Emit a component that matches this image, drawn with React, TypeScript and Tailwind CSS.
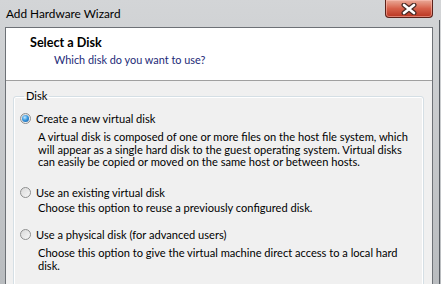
import { FunctionComponent } from "react";

const font = { fontFamily: 'Lato, "Noto Sans", sans-serif' };

const Radio: FunctionComponent<{ checked?: boolean }> = ({ checked }) => (
  <span className="relative w-[11px] h-[11px] shrink-0 rounded-full border border-[#8e8f8f] bg-gradient-to-br from-[#d9d9d9] to-[#f7f7f7] flex items-center justify-center">
    {checked && (
      <span className="w-[7px] h-[7px] rounded-full bg-[radial-gradient(circle_at_40%_35%,#c4e8ff_0%,#3a9ae0_45%,#0d4f9a_100%)]" />
    )}
  </span>
);

const Option: FunctionComponent<{
  label: string;
  desc: string;
  checked?: boolean;
  className?: string;
  descClass?: string;
}> = ({ label, desc, checked, className, descClass }) => (
  <div className={className}>
    <div className="flex items-center gap-[5px] h-[13px] leading-[13px]">
      <Radio checked={checked} />
      <span>{label}</span>
    </div>
    <p className={"pl-[18px] leading-[12.6px] " + (descClass ?? "")}>{desc}</p>
  </div>
);

const App: FunctionComponent = () => {
  return (
    <div
      className="w-[441px] h-[284px] overflow-hidden relative bg-gradient-to-b from-[#d3d5d7] to-[#b9bcbf] text-black text-[11.1px]"
      style={font}
    >
      {/* title bar */}
      <div className="h-[27px] flex items-center pl-[6px] text-[11.8px] text-black">
        Add Hardware Wizard
      </div>
      <div className="absolute top-0 left-[385px] w-[48px] h-[18px] rounded-b-[4px] border border-t-0 border-[#5b2119] bg-gradient-to-b from-[#e9a998] via-[#d6604a] to-[#b83420] flex items-center justify-center shadow-[inset_0_0_0_1px_rgba(255,200,190,0.5)]">
        <svg width="18" height="12" viewBox="0 0 18 12">
          <path d="M4 2 L14 10 M14 2 L4 10" stroke="#4a2a25" strokeWidth="5" strokeLinecap="round" />
          <path d="M4 2 L14 10 M14 2 L4 10" stroke="#ffffff" strokeWidth="2.6" strokeLinecap="round" />
        </svg>
      </div>

      {/* client area */}
      <div className="ml-[5px] w-[428px] h-[257px] border-l border-r border-t border-[#6d7176] flex flex-col">
        <div className="h-[53px] shrink-0 bg-white border-b border-[#a0a0a0] pt-[8px]">
          <div className="pl-[24px] font-bold text-[12.6px] leading-[14px]">Select a Disk</div>
          <div className="pl-[48px] mt-[3px] text-[10.9px] leading-[14px] text-[#1c2a78]">
            Which disk do you want to use?
          </div>
        </div>
        <div className="flex-1 bg-[#f0f0f0] pl-[7px] pt-[8px]">
          <fieldset className="w-[411px] h-[200px] border border-[#d5dfe5] rounded-[3px] shadow-[inset_0_0_0_1px_#ffffff] pl-[6px] pr-[4px]">
            <legend className="px-[2px] ml-[4px] leading-[14px]">Disk</legend>
            <Option
              className="mt-[9px]"
              checked
              label="Create a new virtual disk"
              desc="A virtual disk is composed of one or more files on the host file system, which will appear as a single hard disk to the guest operating system. Virtual disks can easily be copied or moved on the same host or between hosts."
              descClass="mt-[6px]"
            />
            <Option
              className="mt-[17px]"
              label="Use an existing virtual disk"
              desc="Choose this option to reuse a previously configured disk."
              descClass="mt-[3px]"
            />
            <Option
              className="mt-[14px]"
              label="Use a physical disk (for advanced users)"
              desc="Choose this option to give the virtual machine direct access to a local hard disk."
              descClass="mt-[6px]"
            />
          </fieldset>
        </div>
      </div>
      <div className="absolute top-[20px] left-[439px] w-[1px] h-[264px] bg-[#555a60]" />
    </div>
  );
};

export default App;
